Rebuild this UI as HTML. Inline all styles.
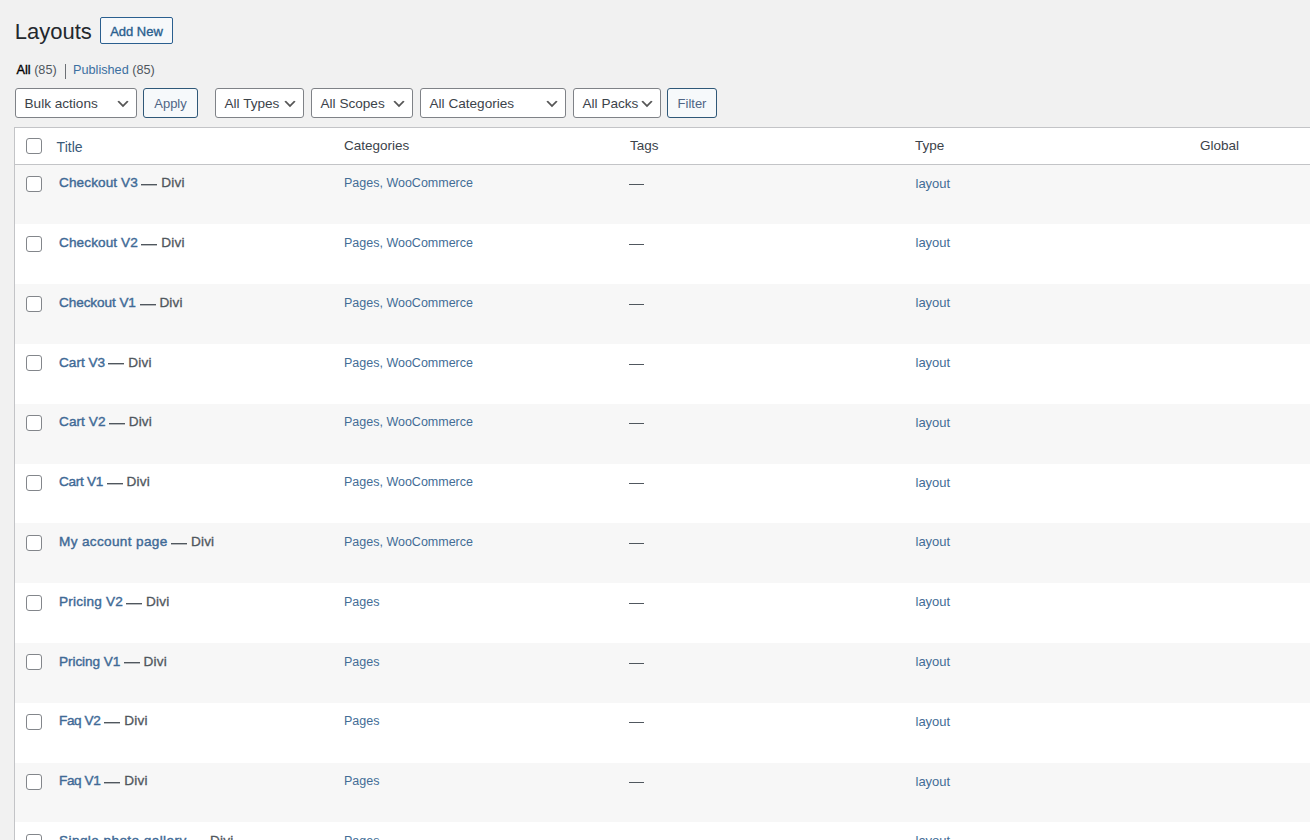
<!DOCTYPE html>
<html><head><meta charset="utf-8"><title>Layouts</title>
<style>
*{box-sizing:border-box;margin:0;padding:0}
html,body{width:1310px;height:840px;overflow:hidden;background:#f1f1f1;font-family:"Liberation Sans",sans-serif;color:#3c434a}
h1{position:absolute;left:14.7px;top:21.3px;font-size:22px;line-height:22px;font-weight:400;color:#23282d;white-space:nowrap}
.addnew{position:absolute;left:100px;top:17px;width:73px;height:27px;border:1px solid #2a5f8f;border-radius:2px;background:#f6f8fa;color:#2a5f8f;font-size:13px;line-height:27px;text-align:center;white-space:nowrap;-webkit-text-stroke:0.35px #2a5f8f}
.sub{position:absolute;left:16.5px;top:64.2px;font-size:12.7px;line-height:13px;color:#50575e;white-space:nowrap}
.sub b{color:#000;font-weight:400;-webkit-text-stroke:0.35px #000}
.sub a{color:#3b6fa0;text-decoration:none}
.sep{position:absolute;left:65px;top:64px;width:1px;height:15px;background:#6c7075}
.sel{position:absolute;top:88px;height:30px;border:1px solid #7f8287;border-radius:3px;background:#fff;color:#3c434a}
.sel .st{position:absolute;left:8.5px;top:7.6px;font-size:13.6px;line-height:14px;white-space:nowrap}
.sel .chev{position:absolute;right:5px;top:6.7px}
.btn{position:absolute;top:88px;height:30px;border:1px solid #2f5878;border-radius:3px;background:#f6f9fb;color:#4f6585;font-size:13px;line-height:29px;text-align:center}
.tbl{position:absolute;left:14px;top:127px;width:1500px;height:800px;border:1px solid #c3c4c7;background:#fff}
.thb{position:absolute;left:15px;top:163.6px;width:1500px;height:1px;background:#c3c4c7}
.row{position:absolute;left:15px;width:1500px;height:59.8px;background:#fff}
.row.alt{background:#f7f7f7}
.cb{position:absolute;left:26px;width:16px;height:16px;border:1px solid #83868b;border-radius:3px;background:#fff}
.th{position:absolute;top:139px;font-size:13.5px;line-height:14px;color:#3c434a;white-space:nowrap}
.th a{color:#3a5a78;text-decoration:none}
.rt{position:absolute;left:44px;top:11.6px;font-size:13.6px;line-height:14px;color:#3f6a96;-webkit-text-stroke:0.4px #3f6a96;white-space:nowrap}
.rd{position:absolute;top:11.6px;font-size:13.6px;letter-spacing:0.15px;line-height:14px;color:#50575e;-webkit-text-stroke:0.3px #50575e;white-space:nowrap}
.md{position:absolute;width:16px;height:1px;background:#50575e;box-shadow:0 1px 0 rgba(80,87,94,.4)}
.ct{position:absolute;left:329px;top:12.6px;font-size:12.5px;line-height:13px;color:#436d96;white-space:nowrap}
.dash{position:absolute;left:614px;top:19.6px;width:15px;height:1px;background:#50575e}
.ty{position:absolute;left:900.5px;top:12px;font-size:13px;line-height:13px;color:#436d96}
</style></head><body>
<h1>Layouts</h1>
<div class="addnew">Add New</div>
<div class="sub"><b>All</b> (85)</div><div class="sep"></div><div class="sub" style="left:73px"><a>Published</a> (85)</div>

<div class="sel" style="left:15px;width:122px"><span class="st">Bulk actions</span><svg class="chev" width="16" height="16" viewBox="0 0 20 20"><path d="M5 6l5 5 5-5 2 1-7 7-7-7 2-1z" fill="#555"/></svg></div>
<div class="btn" style="left:143px;width:55px">Apply</div>
<div class="sel" style="left:215px;width:89px"><span class="st">All Types</span><svg class="chev" width="16" height="16" viewBox="0 0 20 20"><path d="M5 6l5 5 5-5 2 1-7 7-7-7 2-1z" fill="#555"/></svg></div>
<div class="sel" style="left:311px;width:102px"><span class="st">All Scopes</span><svg class="chev" width="16" height="16" viewBox="0 0 20 20"><path d="M5 6l5 5 5-5 2 1-7 7-7-7 2-1z" fill="#555"/></svg></div>
<div class="sel" style="left:420px;width:146px"><span class="st">All Categories</span><svg class="chev" width="16" height="16" viewBox="0 0 20 20"><path d="M5 6l5 5 5-5 2 1-7 7-7-7 2-1z" fill="#555"/></svg></div>
<div class="sel" style="left:573px;width:88px"><span class="st">All Packs</span><svg class="chev" width="16" height="16" viewBox="0 0 20 20"><path d="M5 6l5 5 5-5 2 1-7 7-7-7 2-1z" fill="#555"/></svg></div>
<div class="btn" style="left:667px;width:50px">Filter</div>
<div class="tbl"></div>
<div class="thb"></div>
<div class="cb" style="top:138px"></div>
<div class="th" style="left:56.6px;top:139.6px;font-size:14px"><a>Title</a></div>
<div class="th" style="left:344px">Categories</div>
<div class="th" style="left:630px">Tags</div>
<div class="th" style="left:915px">Type</div>
<div class="th" style="left:1200px">Global</div>
<div class="row alt" style="top:164.60px"><div class="cb" style="top:11.4px;left:11px"></div><div class="rt" style="letter-spacing:0.100px">Checkout V3</div><div class="md" style="left:126.40px;top:19.40px"></div><div class="rd" style="left:146.30px">Divi</div><div class="ct">Pages, WooCommerce</div><div class="dash"></div><div class="ty">layout</div></div>
<div class="row" style="top:224.40px"><div class="cb" style="top:11.4px;left:11px"></div><div class="rt" style="letter-spacing:0.100px">Checkout V2</div><div class="md" style="left:126.40px;top:19.60px"></div><div class="rd" style="left:146.30px">Divi</div><div class="ct">Pages, WooCommerce</div><div class="dash"></div><div class="ty">layout</div></div>
<div class="row alt" style="top:284.20px"><div class="cb" style="top:11.4px;left:11px"></div><div class="rt" style="letter-spacing:-0.090px">Checkout V1</div><div class="md" style="left:124.50px;top:19.80px"></div><div class="rd" style="left:144.40px">Divi</div><div class="ct">Pages, WooCommerce</div><div class="dash"></div><div class="ty">layout</div></div>
<div class="row" style="top:344.00px"><div class="cb" style="top:11.4px;left:11px"></div><div class="rt" style="letter-spacing:0.000px">Cart V3</div><div class="md" style="left:93.40px;top:19.00px"></div><div class="rd" style="left:113.30px">Divi</div><div class="ct">Pages, WooCommerce</div><div class="dash"></div><div class="ty">layout</div></div>
<div class="row alt" style="top:403.80px"><div class="cb" style="top:11.4px;left:11px"></div><div class="rt" style="letter-spacing:0.067px">Cart V2</div><div class="md" style="left:93.80px;top:19.20px"></div><div class="rd" style="left:113.70px">Divi</div><div class="ct">Pages, WooCommerce</div><div class="dash"></div><div class="ty">layout</div></div>
<div class="row" style="top:463.60px"><div class="cb" style="top:11.4px;left:11px"></div><div class="rt" style="letter-spacing:-0.283px">Cart V1</div><div class="md" style="left:91.70px;top:19.40px"></div><div class="rd" style="left:111.60px">Divi</div><div class="ct">Pages, WooCommerce</div><div class="dash"></div><div class="ty">layout</div></div>
<div class="row alt" style="top:523.40px"><div class="cb" style="top:11.4px;left:11px"></div><div class="rt" style="letter-spacing:0.336px">My account page</div><div class="md" style="left:156.10px;top:19.60px"></div><div class="rd" style="left:176.00px">Divi</div><div class="ct">Pages, WooCommerce</div><div class="dash"></div><div class="ty">layout</div></div>
<div class="row" style="top:583.20px"><div class="cb" style="top:11.4px;left:11px"></div><div class="rt" style="letter-spacing:0.200px">Pricing V2</div><div class="md" style="left:111.20px;top:19.80px"></div><div class="rd" style="left:131.10px">Divi</div><div class="ct">Pages</div><div class="dash"></div><div class="ty">layout</div></div>
<div class="row alt" style="top:643.00px"><div class="cb" style="top:11.4px;left:11px"></div><div class="rt" style="letter-spacing:-0.078px">Pricing V1</div><div class="md" style="left:108.70px;top:19.00px"></div><div class="rd" style="left:128.60px">Divi</div><div class="ct">Pages</div><div class="dash"></div><div class="ty">layout</div></div>
<div class="row" style="top:702.80px"><div class="cb" style="top:11.4px;left:11px"></div><div class="rt" style="letter-spacing:-0.400px">Faq V2</div><div class="md" style="left:89.40px;top:19.20px"></div><div class="rd" style="left:109.30px">Divi</div><div class="ct">Pages</div><div class="dash"></div><div class="ty">layout</div></div>
<div class="row alt" style="top:762.60px"><div class="cb" style="top:11.4px;left:11px"></div><div class="rt" style="letter-spacing:-0.400px">Faq V1</div><div class="md" style="left:89.40px;top:19.40px"></div><div class="rd" style="left:109.30px">Divi</div><div class="ct">Pages</div><div class="dash"></div><div class="ty">layout</div></div>
<div class="row" style="top:822.40px"><div class="cb" style="top:11.4px;left:11px"></div><div class="rt" style="letter-spacing:0.411px">Single photo gallery</div><div class="md" style="left:175.20px;top:19.60px"></div><div class="rd" style="left:195.10px">Divi</div><div class="ct">Pages</div><div class="dash"></div><div class="ty">layout</div></div>
</body></html>
